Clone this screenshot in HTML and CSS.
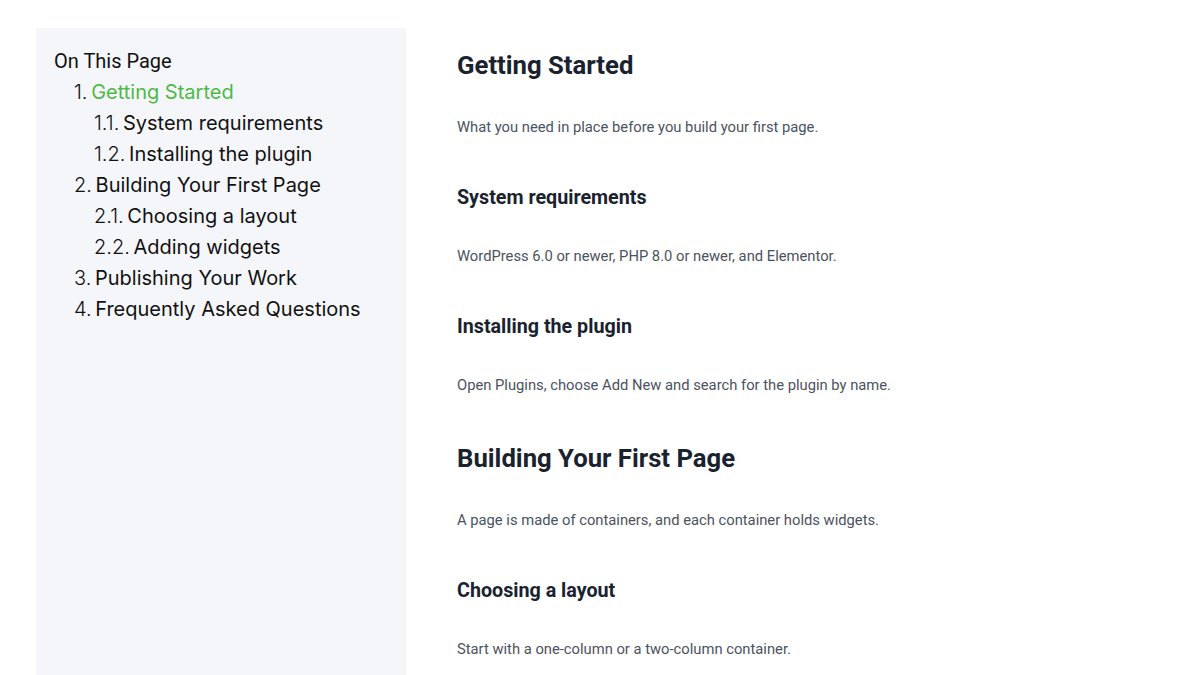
FILE: index.html
```html
<!DOCTYPE html>
<html lang="en">
<head>
    <meta charset="UTF-8">
    <meta name="viewport" content="width=device-width, initial-scale=1.0">
    <title>Docs - Getting Started</title>
    <link rel="stylesheet" href="styles.css">
</head>
<body>
    <div class="page">
        <aside class="toc">
            <div class="toc-title">On This Page</div>
            <ol class="toc-list">
                <li class="active"><span class="num">1.</span> <a href="#getting-started">Getting Started</a>
                    <ol class="toc-sub">
                        <li><span class="num">1.1.</span> <a href="#system-requirements">System requirements</a></li>
                        <li><span class="num">1.2.</span> <a href="#installing">Installing the plugin</a></li>
                    </ol>
                </li>
                <li><span class="num">2.</span> <a href="#building">Building Your First Page</a>
                    <ol class="toc-sub">
                        <li><span class="num">2.1.</span> <a href="#layout">Choosing a layout</a></li>
                        <li><span class="num">2.2.</span> <a href="#widgets">Adding widgets</a></li>
                    </ol>
                </li>
                <li><span class="num">3.</span> <a href="#publishing">Publishing Your Work</a></li>
                <li><span class="num">4.</span> <a href="#faq">Frequently Asked Questions</a></li>
            </ol>
        </aside>

        <main class="content">
            <h2 id="getting-started">Getting Started</h2>
            <p>What you need in place before you build your first page.</p>

            <h3 id="system-requirements">System requirements</h3>
            <p>WordPress 6.0 or newer, PHP 8.0 or newer, and Elementor.</p>

            <h3 id="installing">Installing the plugin</h3>
            <p>Open Plugins, choose Add New and search for the plugin by name.</p>

            <h2 id="building">Building Your First Page</h2>
            <p>A page is made of containers, and each container holds widgets.</p>

            <h3 id="layout">Choosing a layout</h3>
            <p>Start with a one-column or a two-column container.</p>
        </main>
    </div>
</body>
</html>
```

FILE: styles.css
```css
* {
    margin: 0;
    padding: 0;
    box-sizing: border-box;
    font-family: 'Roboto', 'Liberation Sans', sans-serif;
}

body {
    height: 100vh;
    overflow: hidden;
    background-color: #fff;
}

.page {
    display: grid;
    grid-template-columns: 370px 1fr;
    gap: 51px;
    padding: 28px 36px 0;
    height: 100%;
    overflow: hidden;
}

/* Table of contents */
.toc {
    background-color: #f5f6fa;
    padding: 18px 18px 0;
    height: 100%;
}

.toc-title {
    font-size: 20px;
    line-height: 31px;
    color: #111;
}

.toc-list,
.toc-sub {
    list-style: none;
    padding-left: 20px;
}

.toc-list li {
    font-family: 'Inter', 'Roboto', sans-serif;
    font-size: 20px;
    line-height: 31px;
    color: #111;
}

.toc-list a {
    font-family: inherit;
    color: inherit;
    text-decoration: none;
}

.toc-list .num {
    font-family: inherit;
    font-weight: 300;
    margin-right: -2px;
}

.toc-list .active > a {
    color: #4dba45;
}

/* Article */
.content {
    padding-top: 22px;
    color: #1a2230;
}

.content h2 {
    font-size: 25.7px;
    line-height: 31px;
    font-weight: 700;
    margin-bottom: 35px;
}

.content h3 {
    font-size: 19.7px;
    line-height: 23px;
    font-weight: 700;
    margin-bottom: 36px;
}

.content p {
    font-size: 14.75px;
    line-height: 22px;
    color: #4b5260;
    margin-bottom: 48px;
}

.content h3 + p {
    margin-bottom: 47.5px;
}
```
